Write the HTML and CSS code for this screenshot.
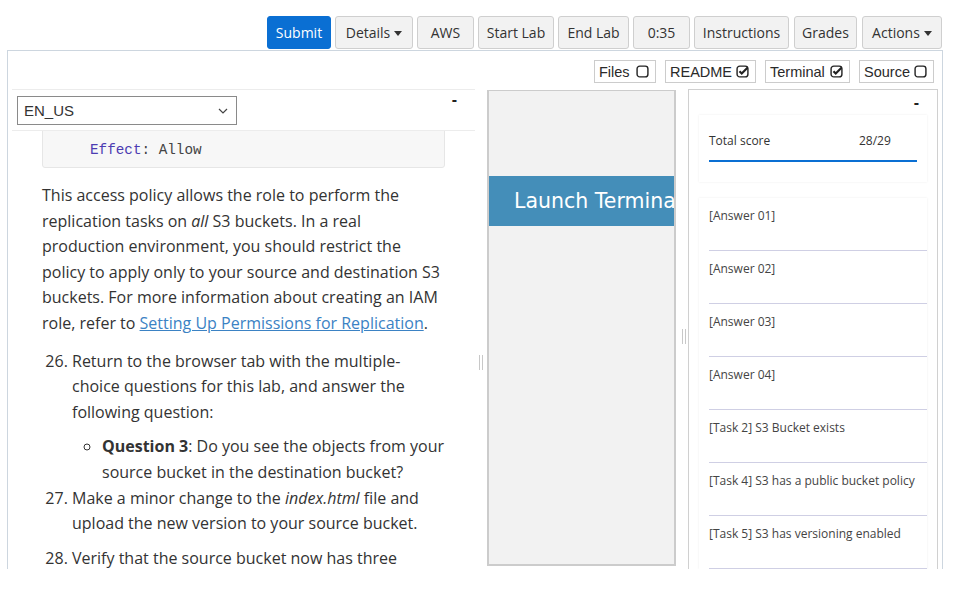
FILE: index.html
```html
<!DOCTYPE html>
<html>
<head>
<meta charset="utf-8">
<link rel="stylesheet" href="styles.css">
</head>
<body>
<div class="toolbar">
  <button class="btn primary w64">Submit</button>
  <button class="btn w78">Details <span class="caret"></span></button>
  <button class="btn w57">AWS</button>
  <button class="btn w76">Start Lab</button>
  <button class="btn w71">End Lab</button>
  <button class="btn w57">0:35</button>
  <button class="btn w95 mr1">Instructions</button>
  <button class="btn w63 mr1">Grades</button>
  <button class="btn w80">Actions <span class="caret"></span></button>
</div>
<div class="main">
  <div class="toggles">
    <span class="toggle t62">Files <svg class="cb" viewBox="0 0 12 12"><rect x="1" y="1" width="10" height="10" rx="2.5" fill="none" stroke="#222" stroke-width="1.3"/></svg></span>
    <span class="toggle t91">README <svg class="cb" viewBox="0 0 12 12"><rect x="1" y="1" width="10" height="10" rx="2.5" fill="none" stroke="#222" stroke-width="1.3"/><path d="M3.2 5.8 L5.3 7.9 L10.6 2.6" fill="none" stroke="#222" stroke-width="2"/></svg></span>
    <span class="toggle t85">Terminal <svg class="cb" viewBox="0 0 12 12"><rect x="1" y="1" width="10" height="10" rx="2.5" fill="none" stroke="#222" stroke-width="1.3"/><path d="M3.2 5.8 L5.3 7.9 L10.6 2.6" fill="none" stroke="#222" stroke-width="2"/></svg></span>
    <span class="toggle t75">Source <svg class="cb" viewBox="0 0 12 12"><rect x="1" y="1" width="10" height="10" rx="2.5" fill="none" stroke="#222" stroke-width="1.3"/></svg></span>
  </div>
  <div class="panes">
    <div class="left">
      <div class="lhead">
        <div class="select"><span>EN_US</span><svg class="chev" viewBox="0 0 10 6"><path d="M1 1 L5 5 L9 1" fill="none" stroke="#444" stroke-width="1.2"/></svg></div>
        <span class="minus">-</span>
      </div>
      <div class="content">
        <pre class="code"><span class="key">Effect</span>: Allow</pre>
        <p>This access policy allows the role to perform the replication tasks on <em>all</em> S3 buckets. In a real production environment, you should restrict the policy to apply only to your source and destination S3 buckets. For more information about creating an IAM role, refer to <a href="#">Setting Up Permissions for Replication</a>.</p>
        <ol start="26">
          <li>Return to the browser tab with the multiple-choice questions for this lab, and answer the following question:
            <ul>
              <li><strong>Question 3</strong>: Do you see the objects from your source bucket in the destination bucket?</li>
            </ul>
          </li>
          <li class="gap">Make a minor change to the <em>index.html</em> file and upload the new version to your source bucket.</li>
          <li>Verify that the source bucket now has three</li>
        </ol>
      </div>
    </div>
    <div class="split"><span class="grip g1"></span></div>
    <div class="middle">
      <div class="launch">Launch Terminal</div>
    </div>
    <div class="split s2"><span class="grip g2"></span></div>
    <div class="right">
      <div class="rhead"><span class="minus">-</span></div>
      <div class="card score">
        <div class="scorerow"><span class="lbl">Total score</span><span>28/29</span></div>
      </div>
      <div class="card answers">
        <div class="row">[Answer 01]</div>
        <div class="row">[Answer 02]</div>
        <div class="row">[Answer 03]</div>
        <div class="row">[Answer 04]</div>
        <div class="row">[Task 2] S3 Bucket exists</div>
        <div class="row">[Task 4] S3 has a public bucket policy</div>
        <div class="row">[Task 5] S3 has versioning enabled</div>
      </div>
    </div>
  </div>
</div>
</body>
</html>
```
FILE: styles.css
```css
* { box-sizing: border-box; }
html, body { margin: 0; padding: 0; background: #fff; }
body { font-family: "Open Sans", "Noto Sans", sans-serif; color: #333; width: 954px; height: 609px; overflow: hidden; }

.toolbar { display: flex; justify-content: flex-end; gap: 4px; padding: 16px 12px 0 0; height: 50px; }
.btn { height: 33px; font-family: "Open Sans", sans-serif; font-size: 14px; color: #333; background: #f2f2f2; border: 1px solid #cfcfcf; border-radius: 3px; padding: 0; display: flex; align-items: center; justify-content: center; gap: 4px; }
.btn.primary { background: #0a6fd3; border-color: #0a6fd3; color: #fff; }
.mr1 { margin-right: 1px; }
.w64 { width: 64px; } .w78 { width: 78px; } .w57 { width: 57px; } .w76 { width: 76px; }
.w71 { width: 71px; } .w95 { width: 95px; } .w63 { width: 63px; } .w80 { width: 80px; }
.caret { width: 0; height: 0; border-left: 4.5px solid transparent; border-right: 4.5px solid transparent; border-top: 5px solid #333; margin-top: 1px; }

.main { margin-left: 7px; width: 936px; height: 519px; border: 1px solid #cdd6df; border-bottom: none; overflow: hidden; }
.toggles { display: flex; justify-content: flex-end; gap: 9px; padding: 9px 8px 0 0; height: 38px; }
.toggle { height: 23px; border: 1px solid #cccccc; font-family: "Liberation Sans", Arial, sans-serif; font-size: 14.5px; color: #2a2a2a; display: flex; align-items: center; justify-content: space-between; padding: 0 6px 0 4px; }
.t62 { width: 62px; } .t91 { width: 91px; } .t85 { width: 85px; } .t75 { width: 75px; }
.cb { width: 13px; height: 13px; }

.panes { display: flex; height: 480px; }
.left { width: 470px; flex: none; overflow: hidden; }
.lhead { margin: 0 3px 0 4px; border-top: 1px solid #ececec; border-bottom: 1px solid #ececec; height: 42px; display: flex; justify-content: space-between; align-items: flex-start; padding: 6px 0 0 5px; }
.select { width: 220px; height: 29px; border: 1px solid #8a8a8a; display: flex; align-items: center; justify-content: space-between; padding: 0 8px 0 6px; font-family: "Liberation Sans", Arial, sans-serif; font-size: 15px; color: #333; }
.chev { width: 10px; height: 6px; }
.minus { font-family: "Liberation Sans", Arial, sans-serif; font-weight: bold; font-size: 16px; color: #222; line-height: 12px; margin-right: 18px; margin-top: -2px; }
.content { padding: 0 33px 0 34px; height: 440px; overflow: hidden; font-size: 16px; line-height: 25.6px; color: #333; }
.code { margin: -3px 0 0 0; padding: 12px 0 8px 47px; background: #f7f7f7; border: 1px solid #e6e6e6; border-radius: 3px; font-family: "Liberation Mono", monospace; font-size: 14.3px; line-height: 18px; color: #444; }
.key { color: #4c3cb2; }
.content p { margin: 15px 0 12px 0; }
.content a { color: #3b82c4; }
.content ol { margin: 0; padding-left: 30px; }
.content ul { margin: 9px 0 0 0; padding-left: 30px; list-style: circle; }
.content li.gap { margin-bottom: 9px; }

.split { width: 9px; flex: none; position: relative; }
.s2 { width: 12px; }
.grip { position: absolute; width: 4px; height: 15px; border-left: 1px solid #c8c8c8; border-right: 1px solid #c8c8c8; }
.g1 { left: 1px; top: 266px; }
.g2 { left: 6px; top: 240px; }
.middle { width: 189px; flex: none; margin-top: 1px; height: 476px; background: #f2f2f2; border: 2px solid #cccccc; border-top-width: 1px; overflow: hidden; }
.launch { margin-top: 85px; height: 50px; background: #448eb9; color: #fff; font-family: "DejaVu Sans", sans-serif; font-size: 20.5px; line-height: 50px; padding-left: 25px; white-space: nowrap; }

.right { width: 250px; flex: none; border: 1px solid #d0d0d0; border-bottom: none; padding: 0 10px; height: 490px; }
.rhead { height: 25px; display: flex; justify-content: flex-end; padding-top: 9px; }
.rhead .minus { margin-right: 8px; }
.card { box-shadow: 0 0 2px rgba(0,0,0,0.08); background: #fff; }
.score { height: 67px; padding: 17px 10px 0 10px; }
.scorerow { display: flex; font-size: 12px; line-height: 18px; border-bottom: 2px solid #0a6fd3; height: 30px; }
.lbl { width: 150px; }
.answers { margin-top: 16px; }
.row { margin-left: 10px; height: 53px; border-bottom: 1px solid #cfcfe4; font-size: 12px; line-height: 18px; padding-top: 9px; color: #444; }
```
